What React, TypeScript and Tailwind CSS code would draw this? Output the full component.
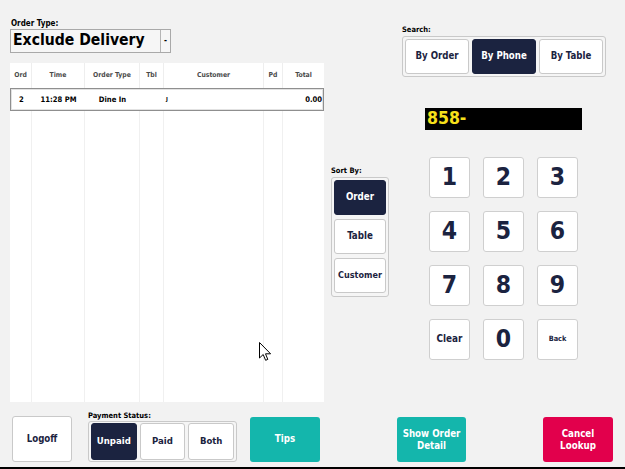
import React from "react";

const cols = [
  { w: "w-[22px]", h: "Ord" },
  { w: "w-[53px]", h: "Time" },
  { w: "w-[55px]", h: "Order Type" },
  { w: "w-[24px]", h: "Tbl" },
  { w: "w-[100px]", h: "Customer" },
  { w: "w-[19px]", h: "Pd" },
  { w: "w-[41px]", h: "Total" },
];

function SegBtn({ label, active, cls }: { label: string; active?: boolean; cls: string }) {
  return (
    <div
      className={
        "flex items-center justify-center rounded-[3px] font-bold " +
        cls +
        (active
          ? " bg-[#1b2340] text-white border border-[#1b2340]"
          : " bg-white text-[#1b2340] border border-[#c9c9c9]")
      }
    >
      {label}
    </div>
  );
}

function Key({ label, size }: { label: string; size: string }) {
  return (
    <div
      className={
        "w-[41px] h-[41px] flex items-center justify-center bg-white border border-[#cfcfcf] rounded-[3px] font-bold text-[#1b2340] " +
        size
      }
    >
      {label}
    </div>
  );
}

export default function App() {
  return (
    <div
      className="relative w-[625px] h-[469px] bg-[#f2f2f2] flex flex-col overflow-hidden"
      style={{ fontFamily: '"DejaVu Sans Condensed", "Liberation Sans", Arial, sans-serif' }}
    >
      {/* top area */}
      <div className="h-[408px] flex items-start">
        {/* left column */}
        <div className="ml-[10px] w-[314px] mt-[19px] flex flex-col">
          <div className="h-[10px] leading-[10px] text-[8px] font-bold text-black pl-[1px]">Order Type:</div>
          <div className="w-[161px] h-[24px] flex border border-[#a9a9a9] bg-[#f6f6f6]">
            <div className="flex-1 flex items-center pl-[2px] text-[15.6px] font-bold text-black leading-none">
              Exclude Delivery
            </div>
            <div className="w-[10px] border-l border-[#b5b5b5] flex items-center justify-center text-[8px] font-bold text-black">
              -
            </div>
          </div>
          {/* table */}
          <div className="mt-[10px] h-[339px] bg-white flex flex-col">
            <div className="flex h-[25px]">
              {cols.map((c, i) => (
                <div
                  key={c.h}
                  className={
                    c.w +
                    " flex items-center justify-center text-[6.8px] font-bold text-[#4a4a4a] " +
                    (i < cols.length - 1 ? "border-r border-[#eeeeee]" : "")
                  }
                >
                  {c.h}
                </div>
              ))}
            </div>
            <div className="flex h-[23px] border border-[#8f8f8f] shadow-[inset_0_0_0_1px_#e2e2e2] text-[7.6px] font-bold text-black">
              <div className="w-[21px] flex items-center justify-center">2</div>
              <div className="w-[53px] flex items-center justify-center">11:28 PM</div>
              <div className="w-[55px] flex items-center justify-center">Dine In</div>
              <div className="w-[24px]"></div>
              <div className="w-[100px] flex items-center pl-[2px] text-[5.5px]">J</div>
              <div className="w-[19px]"></div>
              <div className="w-[40px] flex items-center justify-end pr-[1px]">0.00</div>
            </div>
            <div className="flex flex-1">
              {cols.map((c, i) => (
                <div
                  key={c.h}
                  className={c.w + (i < cols.length - 1 ? " border-r border-[#f0f0f0]" : "")}
                />
              ))}
            </div>
          </div>
        </div>

        {/* sort by */}
        <div className="ml-[7px] w-[58px] mt-[165px] flex flex-col">
          <div className="h-[12px] leading-[11px] text-[7.5px] font-bold text-black">Sort By:</div>
          <div className="h-[120px] border border-[#c9c9c9] rounded-[3px] bg-[#f5f5f5] p-[2px] flex flex-col gap-[4px]">
            <SegBtn label="Order" active cls="h-[35px] text-[9.7px]" />
            <SegBtn label="Table" cls="h-[35px] text-[9.7px]" />
            <SegBtn label="Customer" cls="h-[35px] text-[9px]" />
          </div>
        </div>

        {/* right column */}
        <div className="ml-[13px] w-[204px] mt-[23px] flex flex-col">
          <div className="h-[13px] leading-[13px] text-[7.5px] font-bold text-black">Search:</div>
          <div className="h-[41px] border border-[#c9c9c9] rounded-[3px] bg-[#f5f5f5] p-[2px] flex gap-[3px]">
            <SegBtn label="By Order" cls="w-[64px] h-[35px] text-[9.6px]" />
            <SegBtn label="By Phone" active cls="w-[64px] h-[35px] text-[9.6px]" />
            <SegBtn label="By Table" cls="w-[64px] h-[35px] text-[9.6px]" />
          </div>
          <div className="mt-[31px] ml-[23px] w-[157px] h-[22px] bg-black flex items-center pl-[2px] text-[17.5px] font-bold text-[#f7e11b] leading-none">
            858-
          </div>
          <div className="mt-[27px] ml-[27px] grid grid-cols-[41px_41px_41px] gap-x-[13px] gap-y-[13px]">
            {["1", "2", "3", "4", "5", "6", "7", "8", "9"].map((d) => (
              <Key key={d} label={d} size="text-[24.5px]" />
            ))}
            <Key label="Clear" size="text-[9.9px]" />
            <Key label="0" size="text-[24.5px]" />
            <Key label="Back" size="text-[7.3px]" />
          </div>
        </div>
      </div>

      {/* bottom row */}
      <div className="h-[59px] flex items-start">
        <div className="ml-[12px] mt-[8px] w-[60px] h-[46px] bg-white border border-[#c9c9c9] rounded-[3px] flex items-center justify-center text-[9.6px] font-bold text-[#1b2340]">
          Logoff
        </div>
        <div className="ml-[16px] mt-[2px] w-[149px] flex flex-col">
          <div className="h-[11px] leading-[11px] text-[7.5px] font-bold text-black">Payment Status:</div>
          <div className="h-[41px] border border-[#c9c9c9] rounded-[3px] bg-[#f5f5f5] px-[2px] py-[1px] flex gap-[3px]">
            <SegBtn label="Unpaid" active cls="w-[46px] h-[37px] text-[9.5px]" />
            <SegBtn label="Paid" cls="w-[46px] h-[37px] text-[9.5px]" />
            <SegBtn label="Both" cls="w-[46px] h-[37px] text-[9.5px]" />
          </div>
        </div>
        <div className="ml-[13px] mt-[9px] w-[70px] h-[45px] bg-[#14b6ac] rounded-[3px] flex items-center justify-center text-[9.7px] font-bold text-white">
          Tips
        </div>
        <div className="ml-[77px] mt-[9px] w-[69px] h-[45px] bg-[#14b6ac] rounded-[3px] flex items-center justify-center text-center text-[9.7px] leading-[11.5px] font-bold text-white">
          Show Order
          <br />
          Detail
        </div>
        <div className="ml-[77px] mt-[9px] w-[70px] h-[45px] bg-[#e2004c] rounded-[3px] flex items-center justify-center text-center text-[9.7px] leading-[11.5px] font-bold text-white">
          Cancel
          <br />
          Lookup
        </div>
      </div>
      <div className="h-[2px] bg-black" />

      {/* mouse cursor */}
      <svg className="absolute left-[259px] top-[342px]" width="13" height="20" viewBox="0 0 13 20">
        <path
          d="M0.5 0.5 L0.5 16 L4.2 12.5 L6.6 18.3 L8.8 17.4 L6.5 11.8 L11.6 11.8 Z"
          fill="white"
          stroke="black"
          strokeWidth="1"
          strokeLinejoin="miter"
        />
      </svg>
    </div>
  );
}
